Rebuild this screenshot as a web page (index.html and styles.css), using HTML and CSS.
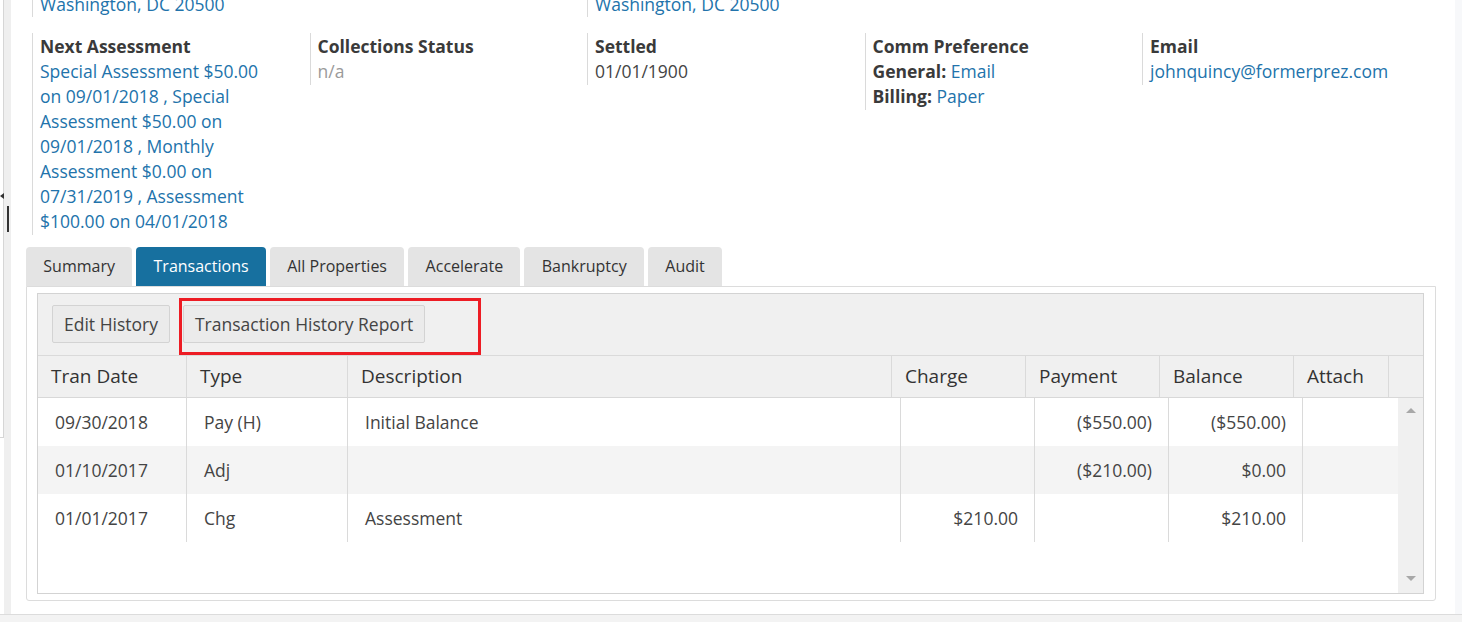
FILE: index.html
```html
<!DOCTYPE html>
<html lang="en">
  <head>
    <meta charset="UTF-8" />
    <title>Owner Account - Transactions</title>
    <link rel="stylesheet" href="styles.css">
  </head>
  <body>
    <div class="screen">
      <div class="side">
        <div class="side-panel"></div>
        <div class="splitter">
          <span class="split-arrow"></span>
          <span class="split-grip"></span>
        </div>
      </div>

      <main class="main">
        <div class="info">
          <div class="field wide">
            <div class="label">Mailing Address</div>
            <div class="link">1600 Pennsylvania Ave NW</div>
            <div class="link">Washington, DC 20500</div>
          </div>
          <div class="field wide">
            <div class="label">Property Address</div>
            <div class="link">1600 Pennsylvania Ave NW</div>
            <div class="link">Washington, DC 20500</div>
          </div>

          <div class="field row-start">
            <div class="label">Next Assessment</div>
            <div class="link">Special Assessment $50.00 on 09/01/2018 , Special Assessment $50.00 on 09/01/2018 , Monthly Assessment $0.00 on 07/31/2019 , Assessment $100.00 on 04/01/2018</div>
          </div>
          <div class="field">
            <div class="label">Collections Status</div>
            <div class="muted">n/a</div>
          </div>
          <div class="field">
            <div class="label">Settled</div>
            <div class="value">01/01/1900</div>
          </div>
          <div class="field">
            <div class="label">Comm Preference</div>
            <div><span class="label">General:</span> <span class="link">Email</span></div>
            <div><span class="label">Billing:</span> <span class="link">Paper</span></div>
          </div>
          <div class="field">
            <div class="label">Email</div>
            <div class="link">johnquincy@formerprez.com</div>
          </div>
        </div>

        <div class="tabs">
          <div class="tab">Summary</div>
          <div class="tab active">Transactions</div>
          <div class="tab">All Properties</div>
          <div class="tab">Accelerate</div>
          <div class="tab">Bankruptcy</div>
          <div class="tab">Audit</div>
        </div>

        <div class="tab-panel">
          <div class="grid">
            <div class="toolbar">
              <button class="btn">Edit History</button>
              <button class="btn">Transaction History Report</button>
              <span class="highlight"></span>
            </div>

            <div class="grid-head">
              <div class="head-cell">Tran Date</div>
              <div class="head-cell">Type</div>
              <div class="head-cell">Description</div>
              <div class="head-cell">Charge</div>
              <div class="head-cell">Payment</div>
              <div class="head-cell">Balance</div>
              <div class="head-cell">Attach</div>
              <div class="head-cell last"></div>
            </div>

            <div class="grid-body">
              <div class="rows">
                <div class="row">
                  <div class="cell">09/30/2018</div>
                  <div class="cell">Pay (H)</div>
                  <div class="cell">Initial Balance</div>
                  <div class="cell num"></div>
                  <div class="cell num">($550.00)</div>
                  <div class="cell num">($550.00)</div>
                  <div class="cell last"></div>
                </div>
                <div class="row">
                  <div class="cell">01/10/2017</div>
                  <div class="cell">Adj</div>
                  <div class="cell"></div>
                  <div class="cell num"></div>
                  <div class="cell num">($210.00)</div>
                  <div class="cell num">$0.00</div>
                  <div class="cell last"></div>
                </div>
                <div class="row">
                  <div class="cell">01/01/2017</div>
                  <div class="cell">Chg</div>
                  <div class="cell">Assessment</div>
                  <div class="cell num">$210.00</div>
                  <div class="cell num"></div>
                  <div class="cell num">$210.00</div>
                  <div class="cell last"></div>
                </div>
              </div>
              <div class="scrollbar">
                <span class="arrow-up"></span>
                <span class="arrow-down"></span>
              </div>
            </div>
          </div>
        </div>
      </main>

      <div class="edge"></div>
    </div>
  </body>
</html>
```

FILE: styles.css
```css
html {
  font-family: "Open Sans", sans-serif;
}
body {
  margin: 0;
  background: #f3f3f3;
  overflow: hidden;
}
.screen {
  display: flex;
  height: 614px;
  background: #fff;
  border-bottom: 1px solid #dcdcdc;
}

/* left splitter */
.side {
  display: flex;
  width: 11px;
}
.side-panel {
  width: 3px;
  height: 437px;
  border-right: 1px solid #d6d6d6;
  border-bottom: 1px solid #d6d6d6;
}
.splitter {
  width: 7px;
  background: #efefef;
  display: flex;
  flex-direction: column;
}
.split-arrow {
  margin: 193px 0 0 -4px;
  width: 0;
  height: 0;
  border-top: 3px solid transparent;
  border-bottom: 3px solid transparent;
  border-right: 4px solid #333;
}
.split-grip {
  margin: 7px 0 0 3px;
  width: 2px;
  height: 26px;
  background: #333;
}
.main {
  flex: 1;
  overflow: hidden;
}
.edge {
  width: 7px;
  background: #f7f8fa;
}

/* account info */
.info {
  display: grid;
  grid-template-columns: repeat(5, 277.5px);
  align-items: start;
  row-gap: 16px;
  margin: -58px 0 0 21px;
}
.field {
  border-left: 1px solid #dadada;
  padding: 1px 30px 1px 7px;
  font-size: 17.5px;
  line-height: 25px;
}
.field.wide {
  grid-column: span 2;
  padding: 0 30px 0 7px;
}
.field.row-start {
  grid-column-start: 1;
}
.label {
  font-weight: 700;
  color: #3a3a3a;
}
.link {
  color: #2273ab;
}
.muted {
  color: #9a9a9a;
}
.value {
  color: #444;
}

/* tabs */
.tabs {
  display: flex;
  gap: 4px;
  margin: 12px 0 0 15px;
}
.tab {
  height: 39px;
  line-height: 39px;
  padding: 0 17.3px;
  background: #e4e4e4;
  border-radius: 4px 4px 0 0;
  font-size: 16px;
  color: #333;
}
.tab.active {
  background: #17709f;
  color: #fff;
}
.tab-panel {
  margin: 0 19px 0 15px;
  border: 1px solid #dcdcdc;
  border-radius: 0 0 3px 3px;
  padding: 6px 11px 6px 10px;
}

/* transactions grid */
.grid {
  border: 1px solid #d3d3d3;
  height: 299px;
  display: flex;
  flex-direction: column;
}
.toolbar {
  position: relative;
  display: flex;
  gap: 13px;
  padding: 11px 14px 12px;
  background: #f0f0f0;
  border-bottom: 1px solid #dadada;
}
.btn {
  height: 38px;
  padding: 0 11px;
  font-family: "Open Sans", sans-serif;
  font-size: 17.5px;
  color: #444;
  background: #ebebeb;
  border: 1px solid #d3d3d3;
  border-radius: 2px;
}
.highlight {
  position: absolute;
  left: 141px;
  top: 4px;
  width: 302px;
  height: 57px;
  box-sizing: border-box;
  border: 3px solid #ed1c24;
}
.grid-head {
  display: grid;
  grid-template-columns: 149px 161px 544px 134px 134px 134px 95px 1fr;
  height: 41px;
  background: #f0f0f0;
  border-bottom: 1px solid #d8d8d8;
}
.head-cell {
  border-right: 1px solid #dadada;
  padding-left: 13px;
  font-size: 19px;
  line-height: 41px;
  color: #333;
}
.head-cell.last {
  border-right: 0;
}
.grid-body {
  flex: 1;
  display: flex;
}
.rows {
  flex: 1;
}
.row {
  display: grid;
  grid-template-columns: 149px 161px 553px 134px 134px 134px 94px;
  height: 48px;
}
.row:nth-child(even) {
  background: #f4f4f4;
}
.cell {
  border-right: 1px solid #dadada;
  padding: 0 16px 0 17px;
  font-size: 17.5px;
  line-height: 48px;
  color: #444;
}
.cell.num {
  text-align: right;
}
.cell.last {
  border-right: 0;
}
.scrollbar {
  width: 25px;
  background: #f0f0f0;
  display: flex;
  flex-direction: column;
  justify-content: space-between;
  align-items: center;
  padding: 10px 0 12px;
  box-sizing: border-box;
}
.arrow-up {
  width: 0;
  height: 0;
  border-left: 5px solid transparent;
  border-right: 5px solid transparent;
  border-bottom: 5px solid #a8a8a8;
}
.arrow-down {
  width: 0;
  height: 0;
  border-left: 5px solid transparent;
  border-right: 5px solid transparent;
  border-top: 5px solid #a8a8a8;
}
```
